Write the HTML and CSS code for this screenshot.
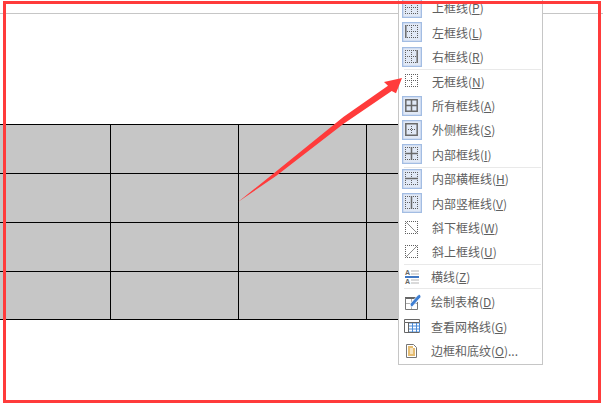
FILE: index.html
```html
<!DOCTYPE html>
<html lang="zh-CN">
<head>
  <meta charset="UTF-8" />
  <title>边框菜单</title>
  <link rel="stylesheet" href="styles.css">
</head>
<body>

<div class="page">
  <div class="ruler"></div>

  <div class="table">
    <div class="cell"></div><div class="cell"></div><div class="cell"></div><div class="cell"></div>
    <div class="cell"></div><div class="cell"></div><div class="cell"></div><div class="cell"></div>
    <div class="cell"></div><div class="cell"></div><div class="cell"></div><div class="cell"></div>
    <div class="cell"></div><div class="cell"></div><div class="cell"></div><div class="cell"></div>
  </div>
</div>

<div class="menu">
  <div class="item"><span class="icon on"><svg width="20" height="20"><path class="dots" d="M3 9.500h13M3 15.500h13M3.500 5v11M9.500 5v11M15.500 5v11"/><path class="solid" d="M3 3.800h13"/></svg></span><span class="label">上框线(<u>P</u>)</span></div>
  <div class="item"><span class="icon on"><svg width="20" height="20"><path class="dots" d="M5 3.500h11M5 9.500h11M5 15.500h11M9.500 3v13M15.500 3v13"/><path class="solid" d="M3.800 3v13"/></svg></span><span class="label">左框线(<u>L</u>)</span></div>
  <div class="item"><span class="icon on"><svg width="20" height="20"><path class="dots" d="M3 3.500h11M3 9.500h11M3 15.500h11M3.500 3v13M9.500 3v13"/><path class="solid" d="M15.200 3v13"/></svg></span><span class="label">右框线(<u>R</u>)</span></div>
  <div class="sep"></div>
  <div class="item"><span class="icon"><svg width="20" height="20"><path class="dots" d="M3 3.500h13M3 9.500h13M3 15.500h13M3.500 3v13M9.500 3v13M15.500 3v13"/></svg></span><span class="label">无框线(<u>N</u>)</span></div>
  <div class="item"><span class="icon on"><svg width="20" height="20"><path class="solid" d="M3.800 3.800h11.400v11.400h-11.400zM9.500 3.800v11.400M3.800 9.500h11.400"/></svg></span><span class="label">所有框线(<u>A</u>)</span></div>
  <div class="item"><span class="icon on"><svg width="20" height="20"><path class="dots" d="M6 9.500h7M9.500 6v7"/><path class="solid" d="M3.800 3.800h11.400v11.400h-11.400z"/></svg></span><span class="label">外侧框线(<u>S</u>)</span></div>
  <div class="item"><span class="icon on"><svg width="20" height="20"><path class="dots" d="M3 3.500h13M3 15.500h13M3.500 3v13M15.500 3v13"/><path class="solid" d="M9.500 3v13M3 9.500h13"/></svg></span><span class="label">内部框线(<u>I</u>)</span></div>
  <div class="sep"></div>
  <div class="item"><span class="icon on"><svg width="20" height="20"><path class="dots" d="M3 3.500h13M3 15.500h13M3.500 3v13M9.500 3v6M9.500 11v5M15.500 3v13"/><path class="solid" d="M3 9.500h13"/></svg></span><span class="label">内部横框线(<u>H</u>)</span></div>
  <div class="item"><span class="icon on"><svg width="20" height="20"><path class="dots" d="M3 3.500h13M3 9.500h6M11 9.500h5M3 15.500h13M3.500 3v13M15.500 3v13"/><path class="solid" d="M9.500 3v13"/></svg></span><span class="label">内部竖框线(<u>V</u>)</span></div>
  <div class="item"><span class="icon"><svg width="20" height="20"><path class="dots" d="M3 3.500h13M3 15.500h13M3.500 3v13M15.500 3v13"/><path class="slant" d="M3.500 3.500l12 12"/></svg></span><span class="label">斜下框线(<u>W</u>)</span></div>
  <div class="item"><span class="icon"><svg width="20" height="20"><path class="dots" d="M3 3.500h13M3 15.500h13M3.500 3v13M15.500 3v13"/><path class="slant" d="M3.500 15.500l12-12"/></svg></span><span class="label">斜上框线(<u>U</u>)</span></div>
  <div class="sep"></div>
  <div class="item tools"><span class="icon"><svg width="20" height="20"><text x="3" y="9" class="small-a">A</text><text x="3" y="18" class="small-a">A</text><path class="rule-thin" d="M9 5h8M9 8h8M9 14h8M9 17h8"/><path class="rule-blue" d="M3 11h14"/></svg></span><span class="label">横线(<u>Z</u>)</span></div>
  <div class="sep wide"></div>
  <div class="item tools"><span class="icon"><svg width="20" height="20"><path class="table-in" d="M9.500 6v11M3.500 11.500h12"/><path class="table-top" d="M3 6h13"/><path class="table-edge" d="M3.500 6v11.500h12V10"/><path class="pen" d="M9 15l-1 -3 8 -9 1.500 -.5 1.500 1.500 -.5 1.500 -8 9z"/></svg></span><span class="label">绘制表格(<u>D</u>)</span></div>
  <div class="item tools"><span class="icon"><svg width="20" height="20"><path class="grid-in" d="M6.500 7h11v9h-11zM6.500 10h11M6.500 13h11M10.500 7v9M14.500 7v9"/><path class="grid-edge" d="M2.500 3.500h15v3h-15zM2.500 6.500v10h15M6.500 6.500v10"/></svg></span><span class="label">查看网格线(<u>G</u>)</span></div>
  <div class="item tools"><span class="icon"><svg width="20" height="20"><path class="sheet" d="M4.500 3.500h7l3 3v10h-10z"/><path class="sheet-fill" d="M6 5h5v2h2v8H6z"/><path class="sheet-in" d="M8 7h3v6H8z"/></svg></span><span class="label">边框和底纹(<u>O</u>)...</span></div>
</div>

<svg class="arrow" width="603" height="405">
  <path d="M238 202 276.700 171 343.300 117 388 85.700 384 82 402 78 396 93.300 391.700 91 343.300 124 276.700 175.500Z"/>
</svg>

<div class="frame-mark"></div>

</body>
</html>
```

FILE: styles.css
```css
* {
  margin: 0;
  padding: 0;
  box-sizing: border-box;
}

html, body {
  width: 603px;
  height: 405px;
  overflow: hidden;
  background: #fff;
  font-family: "Noto Sans CJK SC", "Liberation Sans", sans-serif;
}

.page {
  padding-top: 13px;
}

.ruler {
  height: 1px;
  background: #c6c6c6;
}

/* last column runs on under the menu and stops there */
.table {
  display: grid;
  grid-template-columns: 111px 128px 128px 128px;
  grid-template-rows: 49px 49px 49px 48px;
  width: 495px;
  margin-top: 110px;
  border-top: 1px solid #000;
}

.cell {
  background: #c6c6c6;
  border-right: 1px solid #000;
  border-bottom: 1px solid #000;
}

.menu {
  position: absolute;
  left: 398px;
  top: -6px;
  width: 145px;
  height: 371px;
  padding: 0.8px 0 0 3px;
  background: #fff;
  border: 1px solid #c6c6c6;
  display: flex;
  flex-direction: column;
}

.item {
  display: flex;
  align-items: center;
  flex: none;
  height: 24.400px;
  color: #5f5f5f;
  font-size: 12px;
}

.item.tools .label {
  margin-left: 9px;
}

.item u {
  text-underline-offset: 1px;
}

.icon {
  flex: none;
  width: 20px;
  height: 20px;
}

.icon svg {
  display: block;
}

.icon.on {
  background: #e1e9f6;
  box-shadow: inset 0 0 0 1.300px #a3bde3;
}

.label {
  margin-left: 10px;
  white-space: nowrap;
}

.sep {
  flex: none;
  height: 1px;
  margin: 0 1px -1px 2px;
  background: #e9e9e9;
}

.sep.wide {
  margin-bottom: 0.2px;
}

svg path {
  fill: none;
}

.dots {
  stroke: #5e5e5e;
  stroke-dasharray: 1 1;
}

.solid {
  stroke: #6a6a6a;
  stroke-width: 1.500;
}

.slant {
  stroke: #8a8a8a;
}

.small-a {
  font: bold 7px "Liberation Sans", sans-serif;
  fill: #666;
}

.rule-thin {
  stroke: #b5b5b5;
}

.rule-blue {
  stroke: #3f78c4;
  stroke-width: 2;
}

.table-in {
  stroke: #b0b0b0;
}

.table-top {
  stroke: #666;
  stroke-width: 2;
}

.table-edge {
  stroke: #777;
}

svg .pen {
  fill: #3f7fd2;
  stroke: #fff;
  stroke-width: 0.700;
}

.grid-in {
  stroke: #4a8bd8;
}

.grid-edge {
  stroke: #666;
}

.sheet {
  stroke: #777;
}

svg .sheet-fill {
  fill: #e6bd73;
}

svg .sheet-in {
  fill: #f6e5c3;
}

.arrow {
  position: absolute;
  left: 0;
  top: 0;
  pointer-events: none;
}

svg.arrow path {
  fill: #ff3b3b;
}

.frame-mark {
  position: absolute;
  left: 3px;
  top: 1px;
  width: 598px;
  height: 402px;
  border: 3px solid #ff3b3b;
}
```
